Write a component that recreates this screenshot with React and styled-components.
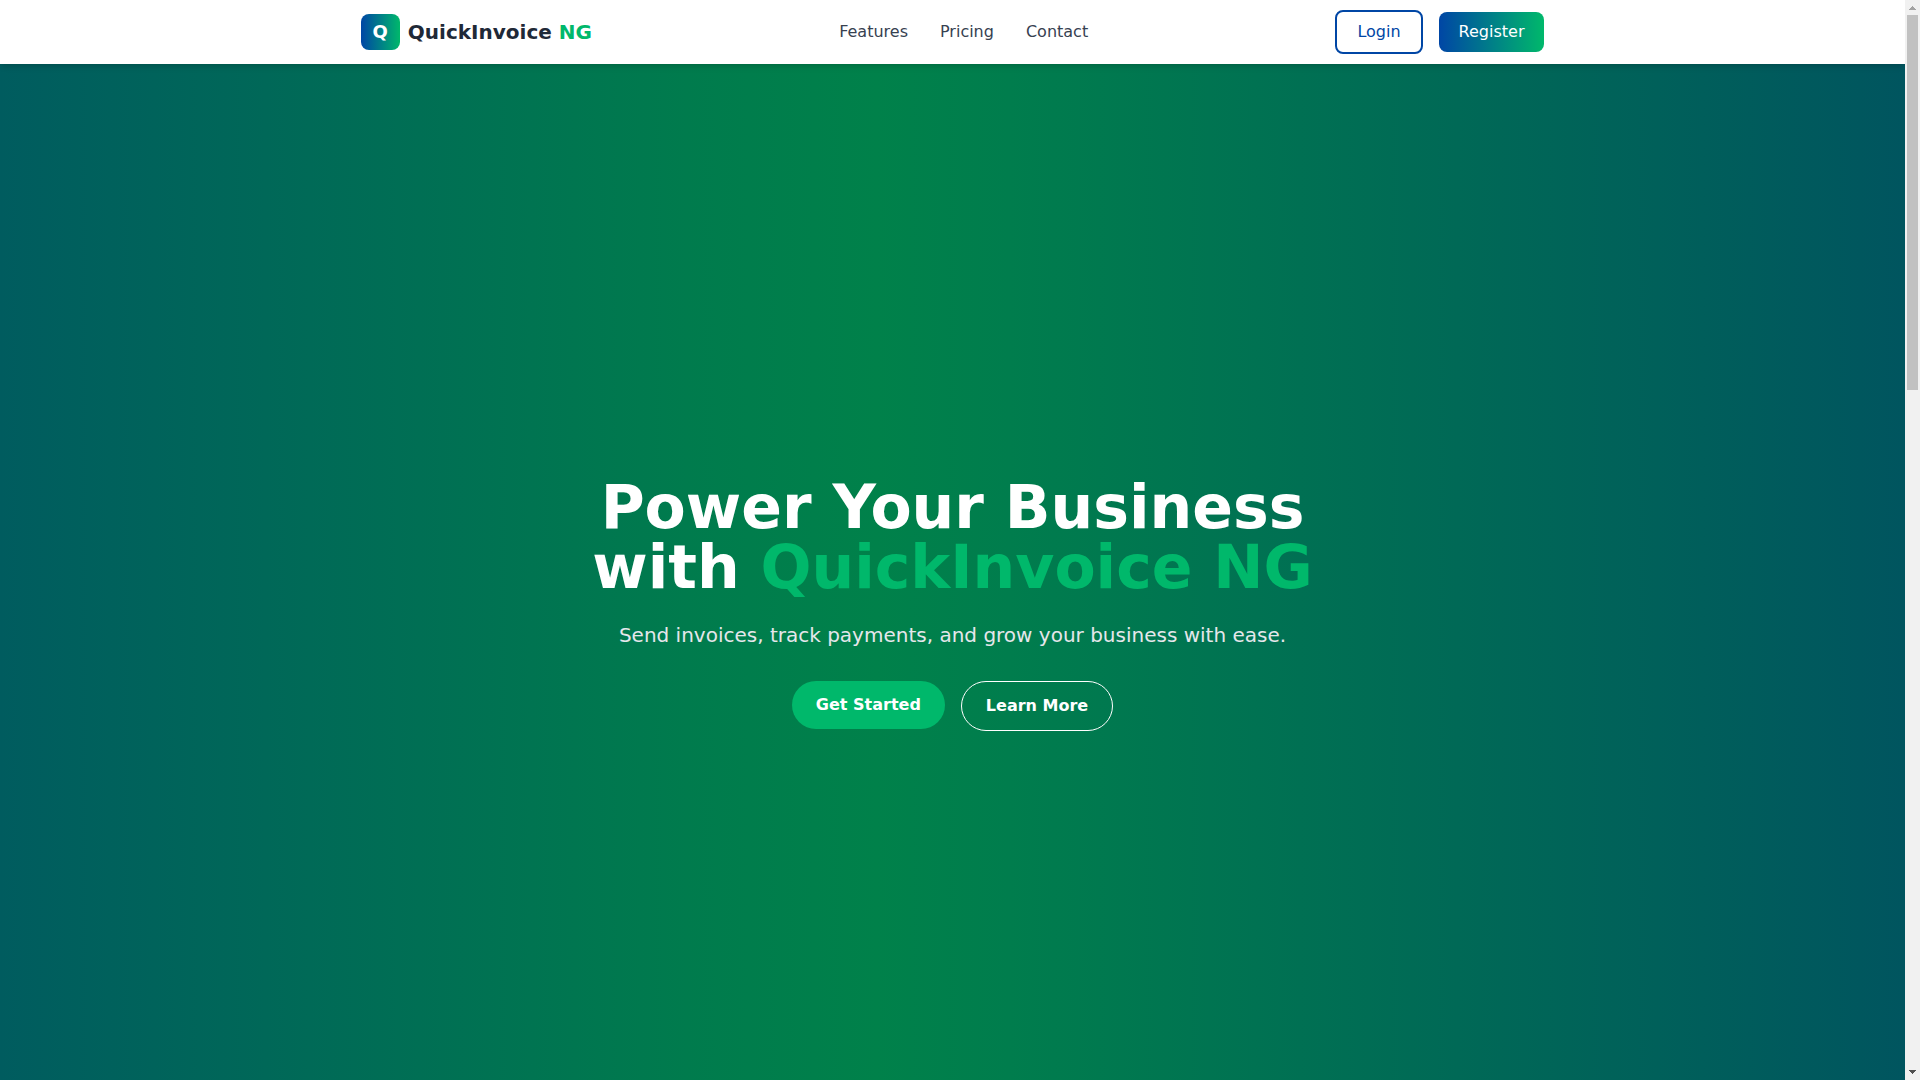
import React from "react";
import styled, { createGlobalStyle } from "styled-components";

const GlobalStyle = createGlobalStyle`
  * {
    box-sizing: border-box;
  }
  body {
    margin: 0;
    font-family: "DejaVu Sans", sans-serif;
    font-size: 16px;
    line-height: 24px;
  }
  h1, p {
    margin: 0;
  }
  a {
    color: inherit;
    text-decoration: none;
  }
`;

const Shell = styled.div`
  display: grid;
  grid-template-columns: minmax(0, 1fr) 15px;
  height: 100vh;
  overflow: hidden;
`;

const Page = styled.div`
  height: 100vh;
  overflow: hidden;
`;

const Header = styled.header`
  position: relative;
  z-index: 1;
  background-color: white;
  box-shadow: 0 4px 6px -1px rgba(0, 0, 0, 0.1), 0 2px 4px -2px rgba(0, 0, 0, 0.1);
`;

const Wrapper = styled.div`
  max-width: 1280px;
  height: 64px;
  margin: 0 auto;
  padding: 0 48px;
  display: flex;
  align-items: center;
  justify-content: space-between;
`;

const Brand = styled.a`
  display: flex;
  align-items: center;
  gap: 8px;
`;

const Badge = styled.span`
  padding: 4px 12px;
  border-radius: 8px;
  background: linear-gradient(to right, #0046a5, #00b86b);
  color: white;
  font-size: 18px;
  line-height: 28px;
  font-weight: bold;
`;

const BrandName = styled.span`
  color: #1f2937;
  font-size: 20px;
  line-height: 28px;
  font-weight: bold;
`;

const Accent = styled.span`
  color: #00b86b;
`;

const Menu = styled.nav`
  display: flex;
  gap: 32px;
  color: #374151;
`;

const Actions = styled.div`
  display: flex;
  align-items: center;
  gap: 16px;
`;

const Button = styled.button`
  padding: 8px 20px;
  border: ${(props) => (props.$outlined ? "2px solid #0046a5" : "none")};
  border-radius: 8px;
  background: ${(props) =>
    props.$outlined ? "white" : "linear-gradient(to right, #0046a5, #00b86b)"};
  color: ${(props) => (props.$outlined ? "#0046a5" : "white")};
  font: inherit;
  cursor: pointer;
`;

const Hero = styled.section`
  min-height: 100vh;
  display: flex;
  flex-direction: column;
  align-items: center;
  justify-content: center;
  background: linear-gradient(to right, #005c5f, #007b4d 36%, #00814a 46%, #007d4d 53%, #00555f);
  color: white;
  text-align: center;
`;

const Title = styled.h1`
  max-width: 768px;
  font-size: 60px;
  line-height: 60px;
  font-weight: bold;
`;

const Subtitle = styled.p`
  margin-top: 24px;
  color: #e5e7eb;
  font-size: 20px;
  line-height: 28px;
`;

const HeroButtons = styled.div`
  margin-top: 32px;
  display: flex;
  align-items: flex-start;
  gap: 16px;
`;

const Pill = styled.button`
  padding: 12px 24px;
  border: ${(props) => (props.$outlined ? "1px solid white" : "none")};
  border-radius: 25px;
  background: ${(props) => (props.$outlined ? "transparent" : "#00b86b")};
  color: white;
  font: inherit;
  font-weight: bold;
  cursor: pointer;
`;

const ScrollTrack = styled.div`
  display: flex;
  flex-direction: column;
  align-items: center;
  background-color: #f1f1f1;
`;

const ScrollThumb = styled.div`
  width: 11px;
  height: 34.7vh;
  margin-bottom: auto;
  background-color: #c1c1c1;
`;

const Arrow = ({ color, points }) => (
  <svg width="15" height="15" viewBox="0 0 15 15" fill={color} shapeRendering="crispEdges" aria-hidden="true">
    <polygon points={points} />
  </svg>
);

const App = () => {
  return (
    <Shell>
      <GlobalStyle />
      <Page>
        <Header>
          <Wrapper>
            <Brand href="#">
              <Badge>Q</Badge>
              <BrandName>
                QuickInvoice <Accent>NG</Accent>
              </BrandName>
            </Brand>
            <Menu>
              <a href="#features">Features</a>
              <a href="#pricing">Pricing</a>
              <a href="#contact">Contact</a>
            </Menu>
            <Actions>
              <Button $outlined>Login</Button>
              <Button>Register</Button>
            </Actions>
          </Wrapper>
        </Header>
        <Hero>
          <Title>
            Power Your Business with <Accent>QuickInvoice NG</Accent>
          </Title>
          <Subtitle>Send invoices, track payments, and grow your business with ease.</Subtitle>
          <HeroButtons>
            <Pill>Get Started</Pill>
            <Pill $outlined>Learn More</Pill>
          </HeroButtons>
        </Hero>
      </Page>
      <ScrollTrack>
        <Arrow color="#a3a3a3" points="4,10 11,10 7.5,6" />
        <ScrollThumb />
        <Arrow color="#505050" points="4,5 11,5 7.5,9" />
      </ScrollTrack>
    </Shell>
  );
};

export default App;
